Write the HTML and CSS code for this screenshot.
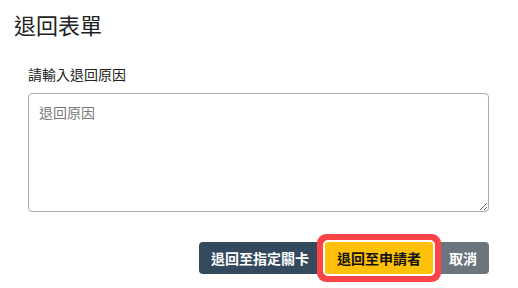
FILE: index.html
```html
<!DOCTYPE html>
<html lang="zh-Hant">
<head>
<meta charset="utf-8">
<title>退回表單</title>
<link rel="stylesheet" href="styles.css">
</head>
<body>
<div class="dialog">
  <div class="dialog-header">
    <h2 class="dialog-title">退回表單</h2>
  </div>
  <div class="dialog-body">
    <label class="field-label" for="reason">請輸入退回原因</label>
    <textarea id="reason" class="field-input" placeholder="退回原因"></textarea>
  </div>
  <div class="dialog-footer">
    <button class="btn btn-dark">退回至指定關卡</button>
    <button class="btn btn-warning btn-focus">退回至申請者</button>
    <button class="btn btn-gray">取消</button>
  </div>
</div>
</body>
</html>
```
FILE: styles.css
```css
html, body {
  margin: 0;
  padding: 0;
  background: #ffffff;
}
body {
  font-family: "Noto Sans CJK TC", "Noto Sans", sans-serif;
  color: #212529;
}
.dialog {
  width: 518px;
  height: 288px;
  box-sizing: border-box;
  display: flex;
  flex-direction: column;
}
.dialog-header {
  padding: 9px 14px 0 14px;
}
.dialog-title {
  margin: 0;
  font-size: 22px;
  font-weight: 400;
  line-height: 30px;
  color: #222;
}
.dialog-body {
  padding: 25px 29px 0 28px;
  display: flex;
  flex-direction: column;
}
.field-label {
  font-size: 14px;
  line-height: 20px;
  margin-bottom: 9px;
  color: #222;
}
.field-input {
  box-sizing: border-box;
  width: 461px;
  height: 119px;
  margin: 0;
  padding: 8px 10px;
  border: 1px solid #aaaaaa;
  border-radius: 4px;
  font-family: inherit;
  font-size: 14px;
  line-height: 20px;
  color: #333;
  resize: vertical;
}
.field-input::placeholder {
  color: #7a7a7a;
}
.dialog-footer {
  display: flex;
  justify-content: flex-end;
  gap: 4px;
  padding: 30px 29px 0 0;
}
.btn {
  box-sizing: border-box;
  height: 32px;
  padding: 0 12px;
  border: none;
  border-radius: 4px;
  font-family: inherit;
  font-size: 14px;
  font-weight: 700;
  line-height: 32px;
  cursor: pointer;
}
.btn-dark {
  background: #34495e;
  color: #ffffff;
}
.btn-warning {
  background: #ffc107;
  color: #111;
}
.btn-gray {
  background: #6c757d;
  color: #ffffff;
}
.btn-focus {
  position: relative;
  z-index: 1;
  box-shadow: 0 0 0 2px #ffffff, 0 0 0 8px #fb4348;
  border-radius: 3px;
}
```
